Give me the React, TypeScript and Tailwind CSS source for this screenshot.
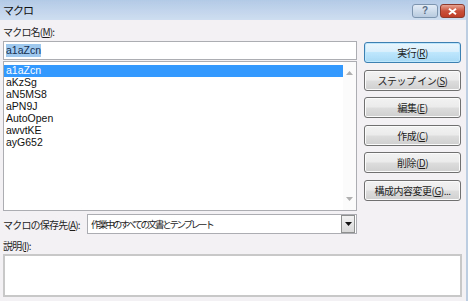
const jp = "font-['Noto_Sans_CJK_JP',sans-serif]";
const lat = "font-['Liberation_Sans','Noto_Sans_CJK_JP',sans-serif]";

const macros = ["a1aZcn", "aKzSg", "aN5MS8", "aPN9J", "AutoOpen", "awvtKE", "ayG652"];

function DlgButton({ label, k, tail = "", primary = false }: { label: string; k: string; tail?: string; primary?: boolean }) {
  return (
    <button
      className={`h-[21px] w-[97px] rounded-[3px] border text-[10px] tracking-[-0.5px] text-[#1e1e1e] ${jp} ${
        primary
          ? "border-[#3c7fb1] shadow-[inset_0_0_0_1px_#bde6fd] bg-[linear-gradient(#eaf6fd_0%,#d9f0fc_45%,#bee6fd_50%,#a7d9f5_100%)]"
          : "border-[#707070] shadow-[inset_0_0_0_1px_#fbfbfb] bg-[linear-gradient(#f2f2f2_0%,#ebebeb_48%,#dddddd_52%,#cfcfcf_100%)]"
      }`}
    >
      {label}(<span className="underline">{k}</span>){tail}
    </button>
  );
}

function Arrow({ up = false, color = "#a0a0a0" }: { up?: boolean; color?: string }) {
  return (
    <svg width="7" height="4" viewBox="0 0 7 4">
      <path d={up ? "M0 4 L3.5 0 L7 4 Z" : "M0 0 L7 0 L3.5 4 Z"} fill={color} />
    </svg>
  );
}

export default function App() {
  return (
    <div className="w-[468px] h-[301px] overflow-hidden flex flex-col bg-[#f4f1f5] border-r-2 border-[#bccde2]">
      {/* title bar */}
      <div className="h-[20px] shrink-0 flex items-center justify-between bg-[linear-gradient(#b3cae6,#cfdef0)] pl-[3px] pr-[1px]">
        <span className={`text-[11px] tracking-[-1px] text-[#111] ${jp}`}>マクロ</span>
        <div className="flex gap-[2px] pt-[2px]">
          <div className="w-[26px] h-[14px] rounded-[3px] border border-[#7e95b0] bg-[linear-gradient(#e3ecf6,#b9cbe0)] flex items-center justify-center text-[10px] font-bold leading-none text-[#5b6d84] font-['Liberation_Sans',sans-serif]">
            ?
          </div>
          <div className="w-[25px] h-[14px] rounded-[3px] border border-[#8d3a2c] bg-[linear-gradient(#e8a493,#c9513b_50%,#bf3e28)] flex items-center justify-center">
            <svg width="9" height="7" viewBox="0 0 9 7">
              <path d="M1 0.8 L8 6.2 M8 0.8 L1 6.2" stroke="#fff" strokeWidth="2" />
            </svg>
          </div>
        </div>
      </div>

      {/* body */}
      <div className="flex flex-col px-[3px]">
        <div className={`h-[21px] flex items-center pt-[2px] text-[10px] tracking-[-0.8px] text-[#1e1e1e] ${jp}`}>
          マクロ名(<span className="underline">M</span>):
        </div>

        <div className="flex">
          <div className="w-[354px] flex flex-col">
            <div className="h-[19px] border border-[#abadb3] bg-white flex items-center px-[2px]">
              <span className={`text-[10.5px] leading-[13px] bg-[#9fc8ef] text-[#14304f] ${lat}`}>a1aZcn</span>
            </div>
            <div className="mt-[1px] h-[150px] border border-[#abadb3] bg-white flex">
              <div className="flex-1 pt-[3px]">
                {macros.map((m, i) => (
                  <div
                    key={m}
                    className={`h-[12px] flex items-center pl-[2px] text-[10.5px] ${lat} ${
                      i === 0 ? "bg-[#3399ff] text-white" : "text-[#111]"
                    }`}
                  >
                    {m}
                  </div>
                ))}
              </div>
              <div className="w-[13px] flex flex-col items-center justify-between py-[9px] bg-[#fbfbfb]">
                <Arrow up color="#b0b0b0" />
                <Arrow color="#b0b0b0" />
              </div>
            </div>
          </div>

          <div className="ml-[7px] mt-[1px] flex flex-col gap-[6.6px]">
            <DlgButton label="実行" k="R" primary />
            <DlgButton label="ステップ イン" k="S" />
            <DlgButton label="編集" k="E" />
            <DlgButton label="作成" k="C" />
            <DlgButton label="削除" k="D" />
            <DlgButton label="構成内容変更" k="G" tail="..." />
          </div>
        </div>

        <div className="mt-[3px] flex items-center h-[20px]">
          <div className={`w-[84px] text-[10px] tracking-[-0.8px] text-[#1e1e1e] ${jp}`}>
            マクロの保存先(<span className="underline">A</span>):
          </div>
          <div className="w-[270px] h-[20px] border border-[#abadb3] bg-white flex items-center">
            <div className={`flex-1 pl-[3px] text-[9.5px] tracking-[-0.24em] text-[#1e1e1e] ${jp}`}>
              作業中のすべての文書とテンプレート
            </div>
            <div className="w-[14px] h-[18px] mr-[1px] border border-[#8e8f8f] bg-[linear-gradient(#f2f2f2,#d8d8d8)] flex items-center justify-center">
              <Arrow color="#111" />
            </div>
          </div>
        </div>

        <div className={`mt-[5px] h-[13px] flex items-center text-[10px] tracking-[-0.8px] text-[#1e1e1e] ${jp}`}>
          説明(<span className="underline">I</span>):
        </div>

        <div className="mt-[2px] w-[459px] h-[43px] border-2 border-[#c8c8c8] bg-white" />
      </div>
    </div>
  );
}
